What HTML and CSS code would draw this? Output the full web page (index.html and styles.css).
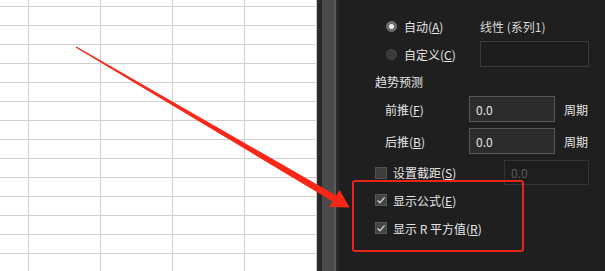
FILE: index.html
```html
<!DOCTYPE html>
<html lang="zh">
<head>
<meta charset="utf-8">
<title>趋势线格式</title>
<link rel="stylesheet" href="styles.css">
</head>
<body>
<div class="screen">
  <div class="sheet"></div>
  <div class="splitter">
    <div class="sp-a"></div><div class="sp-b"></div><div class="sp-c"></div><div class="sp-d"></div>
  </div>
  <div class="panel">
    <div class="row r1">
      <div class="opt"><span class="radio on"></span><span>自动(<u>A</u>)</span></div>
      <span class="name">线性 (系列1)</span>
    </div>
    <div class="row r2">
      <div class="opt"><span class="radio"></span><span>自定义(<u>C</u>)</span></div>
      <div class="field custom"></div>
    </div>
    <div class="row r3">
      <span class="section">趋势预测</span>
    </div>
    <div class="row r4">
      <span class="lab">前推(<u>F</u>)</span>
      <div class="field">0.0</div>
      <span class="unit">周期</span>
    </div>
    <div class="row r5">
      <span class="lab">后推(<u>B</u>)</span>
      <div class="field">0.0</div>
      <span class="unit">周期</span>
    </div>
    <div class="row r6">
      <div class="chk-col"><span class="check"></span><span>设置截距(<u>S</u>)</span></div>
      <div class="field off">0.0</div>
    </div>
    <div class="row r7">
      <span class="check on"><svg viewBox="0 0 12 12" width="12" height="12"><polyline points="2.6,6.4 5,8.8 9.6,3.4" /></svg></span>
      <span class="ctext">显示公式(<u>E</u>)</span>
    </div>
    <div class="row r8">
      <span class="check on"><svg viewBox="0 0 12 12" width="12" height="12"><polyline points="2.6,6.4 5,8.8 9.6,3.4" /></svg></span>
      <span class="ctext">显示 R 平方值(<u>R</u>)</span>
    </div>
  </div>
  <div class="highlight"></div>
  <svg class="arrow" viewBox="0 0 605 271" width="605" height="271">
    <polygon points="76.4,46.4 336.3,195.5 339.6,189.9 349.6,207.4 329.4,207 332.7,201.5 75.6,47.6" />
  </svg>
</div>
</body>
</html>
```

FILE: styles.css
```css
html, body {
  margin: 0;
  padding: 0;
  background: #1f1f1f;
}

.screen {
  position: relative;
  width: 605px;
  height: 271px;
  overflow: hidden;
  display: flex;
  font-family: "Noto Sans CJK SC", "Noto Sans", sans-serif;
  font-size: 12px;
  color: #e4e4e4;
}

.sheet {
  width: 317px;
  flex: none;
  background-color: #ffffff;
  background-image:
    linear-gradient(to right, #cfcfcf 1px, transparent 1px),
    linear-gradient(to bottom, #cfcfcf 1px, transparent 1px);
  background-size: 72px 19px;
  background-position: 28px 6px;
}

.splitter {
  display: flex;
  flex: none;
}
.sp-a { width: 5px; background: #282828; }
.sp-b { width: 12px; background: #4a4a4a; }
.sp-c { width: 2px; background: #5a5a5a; }
.sp-d { width: 3px; background: #2a2a2a; }

.panel {
  flex: 1;
  background: #1f1f1f;
  padding: 13px 0 0 36px;
  display: flex;
  flex-direction: column;
}

.row {
  display: flex;
  align-items: center;
  white-space: nowrap;
}
.r1 { height: 26px; }
.r2 { height: 26px; margin-top: 2px; }
.r3 { height: 28px; }
.r4 { height: 26px; margin-top: 1px; }
.r5 { height: 26px; margin-top: 6px; }
.r6 { height: 25px; margin-top: 6px; }
.r7 { height: 28px; margin-top: 1px; }
.r8 { height: 28px; }

u {
  text-decoration: underline;
  text-underline-offset: 1px;
}

.opt {
  width: 105px;
  box-sizing: border-box;
  padding-left: 11px;
  display: flex;
  align-items: center;
  gap: 7px;
}

.radio {
  width: 11px;
  height: 11px;
  box-sizing: border-box;
  border-radius: 50%;
  background: #3b3b3b;
  border: 1px solid #474747;
  flex: none;
}
.radio.on {
  background: radial-gradient(circle, #e6e6e6 0 2.2px, #6a6a6a 2.8px);
  border-color: #7a7a7a;
}

.name {
  color: #d8d8d8;
}

.field {
  box-sizing: border-box;
  width: 86px;
  height: 26px;
  background: #2c2c2c;
  border: 1px solid #575757;
  padding-left: 6px;
  display: flex;
  align-items: center;
  color: #e4e4e4;
}
.field.custom {
  width: 109px;
  background: #1d1d1d;
  border-color: #393939;
}
.field.off {
  width: 85px;
  height: 25px;
  background: #1e1e1e;
  border-color: #343434;
  color: #575757;
}

.section {
  color: #e4e4e4;
}

.lab {
  width: 94px;
  box-sizing: border-box;
  padding-left: 10px;
}

.unit {
  margin-left: 9px;
}

.chk-col {
  width: 129px;
  display: flex;
  align-items: center;
  gap: 6px;
}

.check {
  width: 12px;
  height: 12px;
  box-sizing: border-box;
  background: #3e3e3e;
  border: 1px solid #505050;
  flex: none;
  display: flex;
}
.check svg {
  margin: -1px;
}
.check polyline {
  fill: none;
  stroke: #cfcfcf;
  stroke-width: 1.4;
}
.check.on {
  background: #444444;
  border-color: #575757;
}

.ctext {
  margin-left: 6px;
}

.highlight {
  position: absolute;
  left: 352px;
  top: 180px;
  width: 172px;
  height: 72px;
  box-sizing: border-box;
  border: 2px solid #ea2419;
  border-radius: 3px;
}

.arrow {
  position: absolute;
  left: 0;
  top: 0;
  pointer-events: none;
}
.arrow polygon {
  fill: #fa2617;
}
```
